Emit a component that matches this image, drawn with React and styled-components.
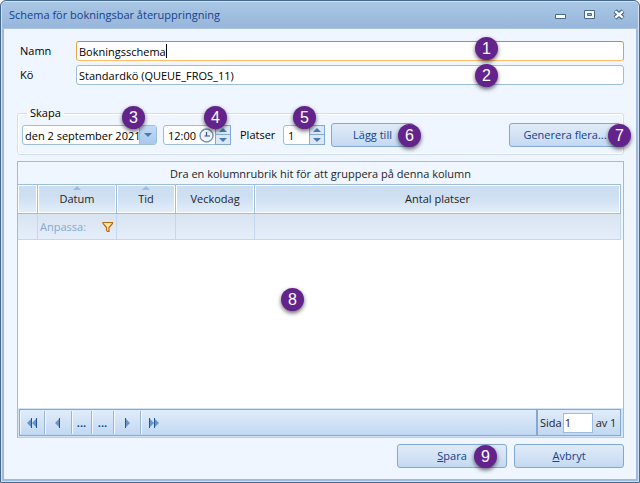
import { useState } from "react";
import styled, { createGlobalStyle } from "styled-components";

const COLORS = {
  frameDark: "#446892",
  frame: "#9dbadb",
  body: "#eff6ff",
  line: "#9ebcdc",
  softLine: "#c3d8ef",
  button: "#84a9d1",
  link: "#15428b",
  text: "#1e1e28",
  badge: "#64238c",
};

const GlobalStyle = createGlobalStyle`
  * {
    box-sizing: border-box;
  }
  body {
    margin: 0;
    background: #fff;
    color: #000;
    font: 11px/16px "Open Sans", "Noto Sans", sans-serif;
  }
  input,
  button {
    font: inherit;
    color: inherit;
    margin: 0;
  }
`;

const Dialog = styled.main`
  display: flex;
  flex-direction: column;
  min-height: 100vh;
  border: 1px solid ${COLORS.frameDark};
  border-radius: 6px 6px 0 0;
  background: ${COLORS.frame};
  box-shadow: inset 0 0 0 1px #d3e2f4;
  padding: 1px 3px 3px;
`;

const TitleBar = styled.header`
  display: flex;
  align-items: center;
  justify-content: space-between;
  height: 27px;
  margin: 0 -2px;
  padding: 0 13px 0 7px;
  border-bottom: 1px solid #abc4e2;
  border-radius: 5px 5px 0 0;
  background: linear-gradient(#a9c6e4, #97b6da);
  h1 {
    margin: 0;
    font-size: 11px;
    font-weight: 400;
    color: ${COLORS.link};
  }
`;

const WindowButtons = styled.div`
  display: flex;
  gap: 17px;
  button {
    display: flex;
    padding: 0;
    border: 0;
    background: none;
  }
`;

const Content = styled.form`
  display: flex;
  flex-direction: column;
  flex: 1;
  padding: 12px 12px 11px 13px;
  background: ${COLORS.body};
`;

const Row = styled.div`
  display: flex;
  align-items: center;
  position: relative;
  margin-bottom: 4px;
  label {
    width: 59px;
    padding-left: 3px;
  }
`;

const Box = styled.div`
  display: flex;
  align-items: center;
  position: relative;
  height: 20px;
  flex: ${(props) => (props.$grow ? 1 : "none")};
  border: 1px solid ${COLORS.line};
  border-color: ${(props) =>
    props.$active ? "#cf8440 #e0a050 #fcbf66 #e8a352" : COLORS.line};
  border-radius: 3px;
  background: #fff;
  input {
    min-width: 0;
    height: 18px;
    padding: 0;
    border: 0;
    outline: 0;
    background: none;
  }
`;

const TextInput = styled.input`
  field-sizing: ${(props) => (props.$fit ? "content" : "fixed")};
  flex: ${(props) => (props.$fit ? "none" : 1)};
  margin-left: 2px;
`;

const Caret = styled.span`
  width: 1px;
  height: 14px;
  background: #000;
`;

const Badge = styled.span`
  position: absolute;
  z-index: 2;
  top: ${(props) => props.$top}px;
  right: ${(props) => props.$right}px;
  width: 23px;
  height: 23px;
  border-radius: 50%;
  background: ${COLORS.badge};
  box-shadow: 0 2px 4px rgba(0, 0, 0, 0.6);
  color: #fff;
  font: 16px/23px "Liberation Sans", Arial, sans-serif;
  text-align: center;
  pointer-events: none;
`;

const Group = styled.fieldset`
  display: flex;
  align-items: center;
  min-width: 0;
  margin: 16px 0 6px;
  padding: 2px 2px 7px 4px;
  border: 1px solid #d1dff0;
  border-radius: 3px;
  box-shadow: inset 0 0 0 1px #fff;
  legend {
    margin-left: 5px;
    padding: 0 3px;
  }
`;

const DateInput = styled.input`
  width: 114px;
  margin-left: 2px;
`;

const ShortInput = styled.input`
  width: ${(props) => props.$width}px;
  margin-left: 4px;
`;

const DropButton = styled.button`
  display: flex;
  align-items: center;
  justify-content: center;
  width: 17px;
  height: 18px;
  padding: 0;
  border: 0;
  border-left: 1px solid ${COLORS.line};
  background: linear-gradient(#c3daf3, #a9c8ec);
`;

const Spinner = styled.div`
  display: flex;
  flex-direction: column;
  width: 16px;
  height: 20px;
  margin: -1px;
  margin-left: auto;
  button {
    display: flex;
    align-items: center;
    justify-content: center;
    height: 10px;
    padding: 0;
    border: 1px solid ${COLORS.button};
    background: #dbe8f7;
  }
  button + button {
    border-top: 0;
  }
`;

const SpinBox = styled(Box)`
  width: ${(props) => props.$width}px;
  margin-left: ${(props) => props.$gap}px;
`;

const PlacesLabel = styled.label`
  margin-left: 9px;
  width: 43px;
`;

const Button = styled.button`
  position: relative;
  width: ${(props) => props.$width}px;
  height: 24px;
  padding: 0;
  border: 1px solid ${COLORS.button};
  border-radius: 3px;
  background: linear-gradient(#e0ebf8, #d3e3f5 50%, #c3d9f2);
  color: ${COLORS.link};
  margin-left: ${(props) => props.$left || "0"};
`;

const Grid = styled.section`
  display: flex;
  flex-direction: column;
  flex: 1;
  position: relative;
  border: 1px solid ${COLORS.line};
  border-bottom: 0;
  background: #fff;
  color: ${COLORS.text};
`;

const GroupPanel = styled.div`
  height: 22px;
  padding-top: 4px;
  background: ${COLORS.body};
  text-align: center;
`;

const Table = styled.table`
  width: 100%;
  table-layout: fixed;
  border-collapse: separate;
  border-spacing: 0;
  border-right: 2px solid ${COLORS.body};
  th,
  td {
    position: relative;
    padding: 0;
    font-weight: 400;
  }
  th {
    height: 30px;
    border: 1px solid ${COLORS.line};
    border-left: 0;
    background: linear-gradient(#cbddf0, #cddff1 40%, #e3eefb);
    box-shadow: inset 1px 1px 0 #fff, inset -1px -1px 0 #fff;
  }
  td {
    height: 26px;
    border: 1px solid ${COLORS.softLine};
    border-width: 0 1px 1px 0;
    background: linear-gradient(#d9e4f1, #e5eefa);
  }
`;

const SortArrow = styled.span`
  position: absolute;
  top: 1px;
  left: calc(50% - 4px);
  border: 4px solid transparent;
  border-top: 0;
  border-bottom-color: ${COLORS.line};
`;

const FilterCell = styled.div`
  display: flex;
  align-items: center;
  justify-content: space-between;
  padding: 0 2px;
  color: #86a8d0;
  button {
    display: flex;
    padding: 0;
    border: 0;
    background: none;
  }
`;

const Pager = styled.nav`
  display: flex;
  height: 30px;
  margin-top: auto;
  padding: 1px 2px 1px 1px;
  border-bottom: 1px solid #b4cfee;
  background: #d3e4f8;
`;

const PagerStrip = styled.div`
  display: flex;
  flex: 1;
  border: 1px solid ${COLORS.button};
  border-right: 0;
  background: linear-gradient(#e1ecfa, #c1d8f2);
`;

const PagerButton = styled.button`
  display: flex;
  align-items: center;
  justify-content: center;
  width: ${(props) => props.$width}px;
  margin: 1px 0;
  padding: 0;
  border: 0;
  border-right: ${(props) => (props.$last ? 0 : "1px solid #98b5d4")};
  box-shadow: inset 1px 0 0 #f3f8ff;
  background: none;
  color: #0c4b9a;
  font-weight: 700;
`;

const PageInfo = styled.div`
  display: flex;
  align-items: center;
  width: 85px;
  border: 1px solid ${COLORS.button};
  border-left-width: 2px;
  padding-left: 2px;
  background: linear-gradient(#e1ecfa, #c1d8f2);
  white-space: nowrap;
  input {
    width: 30px;
    height: 20px;
    margin: 0 3px 0 1px;
    padding: 0 1px;
    border: 1px solid ${COLORS.line};
    background: #fff;
  }
`;

const Actions = styled.footer`
  display: flex;
  justify-content: flex-end;
  gap: 7px;
  margin-top: 6px;
`;

const Arrow = ({ up }) => (
  <svg width="8" height="4" viewBox="0 0 8 4" aria-hidden="true">
    <path d={up ? "M4 0 8 4H0z" : "M0 0h8L4 4z"} fill="#4a7ab5" />
  </svg>
);

const Spin = ({ name }) => (
  <Spinner>
    <button type="button" aria-label={`Öka ${name}`}>
      <Arrow up />
    </button>
    <button type="button" aria-label={`Minska ${name}`}>
      <Arrow />
    </button>
  </Spinner>
);

const ClockIcon = () => (
  <svg width="15" height="15" viewBox="0 0 15 15" aria-hidden="true">
    <circle cx="7.5" cy="7.5" r="6.5" fill="#eef3f9" stroke="#7291b8" strokeWidth="1.4" />
    <circle cx="7.5" cy="7.5" r="5" fill="none" stroke="#fff" />
    <path d="M7.5 4v4H11M5.5 8h2" fill="none" stroke="#33518a" strokeWidth="1.2" />
  </svg>
);

const FunnelIcon = () => (
  <svg width="12" height="12" viewBox="0 0 12 12" aria-hidden="true">
    <path
      d="M1 1.5h9.5v1L7 6.5v4H5.5L4.5 9V6.5L1 2.5z"
      fill="#ffe9a6"
      stroke="#c0670c"
      strokeWidth="1.2"
    />
  </svg>
);

/* Back arrows have their bar on the right, forward arrows on the left */
const PageArrow = ({ forward, double }) => (
  <svg
    width={double ? 11 : 6}
    height="10"
    viewBox={double ? "0 0 11 10" : "0 0 6 10"}
    aria-hidden="true"
  >
    <g transform={forward ? `matrix(-1 0 0 1 ${double ? 11 : 6} 0)` : undefined}>
      <path d="M0 5 5 0v10z" fill="#6a93c8" />
      <path d="M4 0h1v10H4z" fill="#1f56a0" />
      {double && (
        <>
          <path d="M5 5l5-5v10z" fill="#6a93c8" />
          <path d="M9 0h1v10H9z" fill="#1f56a0" />
        </>
      )}
    </g>
  </svg>
);

const App = () => {
  const [name, setName] = useState("Bokningsschema");
  const [queue, setQueue] = useState("Standardkö (QUEUE_FROS_11)");

  return (
    <>
      <GlobalStyle />
      <Dialog>
        <TitleBar>
          <h1>Schema för bokningsbar återuppringning</h1>
          <WindowButtons>
            <button type="button" aria-label="Minimera">
              <svg width="12" height="12">
                <path d="M.5 5.5h10v4H.5z" fill="#fff" stroke="#47698f" />
              </svg>
            </button>
            <button type="button" aria-label="Maximera">
              <svg width="12" height="12">
                <path d="M.5 1.5h10v8H.5z" fill="#fff" stroke="#47698f" />
                <path d="M3.5 4.5h4v2h-4z" fill="#9dbadb" stroke="#47698f" />
              </svg>
            </button>
            <button type="button" aria-label="Stäng">
              <svg width="12" height="12">
                <path d="M2 2l8 7M10 2L2 9" stroke="#47698f" strokeWidth="4.5" />
                <path d="M2.3 2.3l7.4 6.4M9.7 2.3L2.3 8.7" stroke="#fff" strokeWidth="2.2" />
              </svg>
            </button>
          </WindowButtons>
        </TitleBar>

        <Content onSubmit={(e) => e.preventDefault()}>
          <Row>
            <label htmlFor="name">Namn</label>
            <Box $grow $active>
              <TextInput
                id="name"
                $fit
                value={name}
                onChange={(e) => setName(e.target.value)}
              />
              <Caret />
              <Badge $top={-5} $right={125}>1</Badge>
            </Box>
          </Row>
          <Row>
            <label htmlFor="queue">Kö</label>
            <Box $grow>
              <TextInput
                id="queue"
                value={queue}
                onChange={(e) => setQueue(e.target.value)}
              />
              <Badge $top={-2} $right={125}>2</Badge>
            </Box>
          </Row>

          <Group>
            <legend>Skapa</legend>
            <Box>
              <DateInput aria-label="Datum" defaultValue="den 2 september 2021" />
              <DropButton type="button" aria-label="Välj datum">
                <Arrow />
              </DropButton>
              <Badge $top={-20} $right={11}>3</Badge>
            </Box>
            <SpinBox $width={68} $gap={6}>
              <ShortInput $width={31} aria-label="Tid" defaultValue="12:00" />
              <ClockIcon />
              <Spin name="tid" />
              <Badge $top={-20} $right={3}>4</Badge>
            </SpinBox>
            <PlacesLabel htmlFor="places">Platser</PlacesLabel>
            <SpinBox $width={42} $gap={0}>
              <ShortInput id="places" $width={20} defaultValue="1" />
              <Spin name="platser" />
              <Badge $top={-20} $right={8}>5</Badge>
            </SpinBox>
            <Button type="button" $width={83} $left="6px">
              Lägg till
              <Badge $top={0} $right={-8}>6</Badge>
            </Button>
            <Button type="button" $width={112} $left="auto">
              Generera flera...
              <Badge $top={0} $right={-11}>7</Badge>
            </Button>
          </Group>

          <Grid>
            <GroupPanel>
              Dra en kolumnrubrik hit för att gruppera på denna kolumn
            </GroupPanel>
            <Table>
              <colgroup>
                <col width="20" />
                <col width="79" />
                <col width="59" />
                <col width="79" />
                <col />
              </colgroup>
              <thead>
                <tr>
                  <th />
                  <th>
                    <SortArrow />
                    Datum
                  </th>
                  <th>
                    <SortArrow />
                    Tid
                  </th>
                  <th>Veckodag</th>
                  <th>Antal platser</th>
                </tr>
              </thead>
              <tbody>
                <tr>
                  <td />
                  <td>
                    <FilterCell>
                      Anpassa:
                      <button type="button" aria-label="Filter">
                        <FunnelIcon />
                      </button>
                    </FilterCell>
                  </td>
                  <td />
                  <td />
                  <td />
                </tr>
              </tbody>
            </Table>
            <Badge $top={126} $right={319}>8</Badge>
            <Pager>
              <PagerStrip>
                <PagerButton type="button" $width={25} aria-label="Första sidan">
                  <PageArrow double />
                </PagerButton>
                <PagerButton type="button" $width={27} aria-label="Föregående sida">
                  <PageArrow />
                </PagerButton>
                <PagerButton type="button" $width={20}>...</PagerButton>
                <PagerButton type="button" $width={22}>...</PagerButton>
                <PagerButton type="button" $width={27} aria-label="Nästa sida">
                  <PageArrow forward />
                </PagerButton>
                <PagerButton type="button" $width={25} $last aria-label="Sista sidan">
                  <PageArrow forward double />
                </PagerButton>
              </PagerStrip>
              <PageInfo>
                <label htmlFor="page">Sida</label>
                <input id="page" defaultValue="1" />
                av 1
              </PageInfo>
            </Pager>
          </Grid>

          <Actions>
            <Button type="submit" $width={110}>
              <u>S</u>para
              <Badge $top={0} $right={9}>9</Badge>
            </Button>
            <Button type="button" $width={110}>
              <u>A</u>vbryt
            </Button>
          </Actions>
        </Content>
      </Dialog>
    </>
  );
};

export default App;
